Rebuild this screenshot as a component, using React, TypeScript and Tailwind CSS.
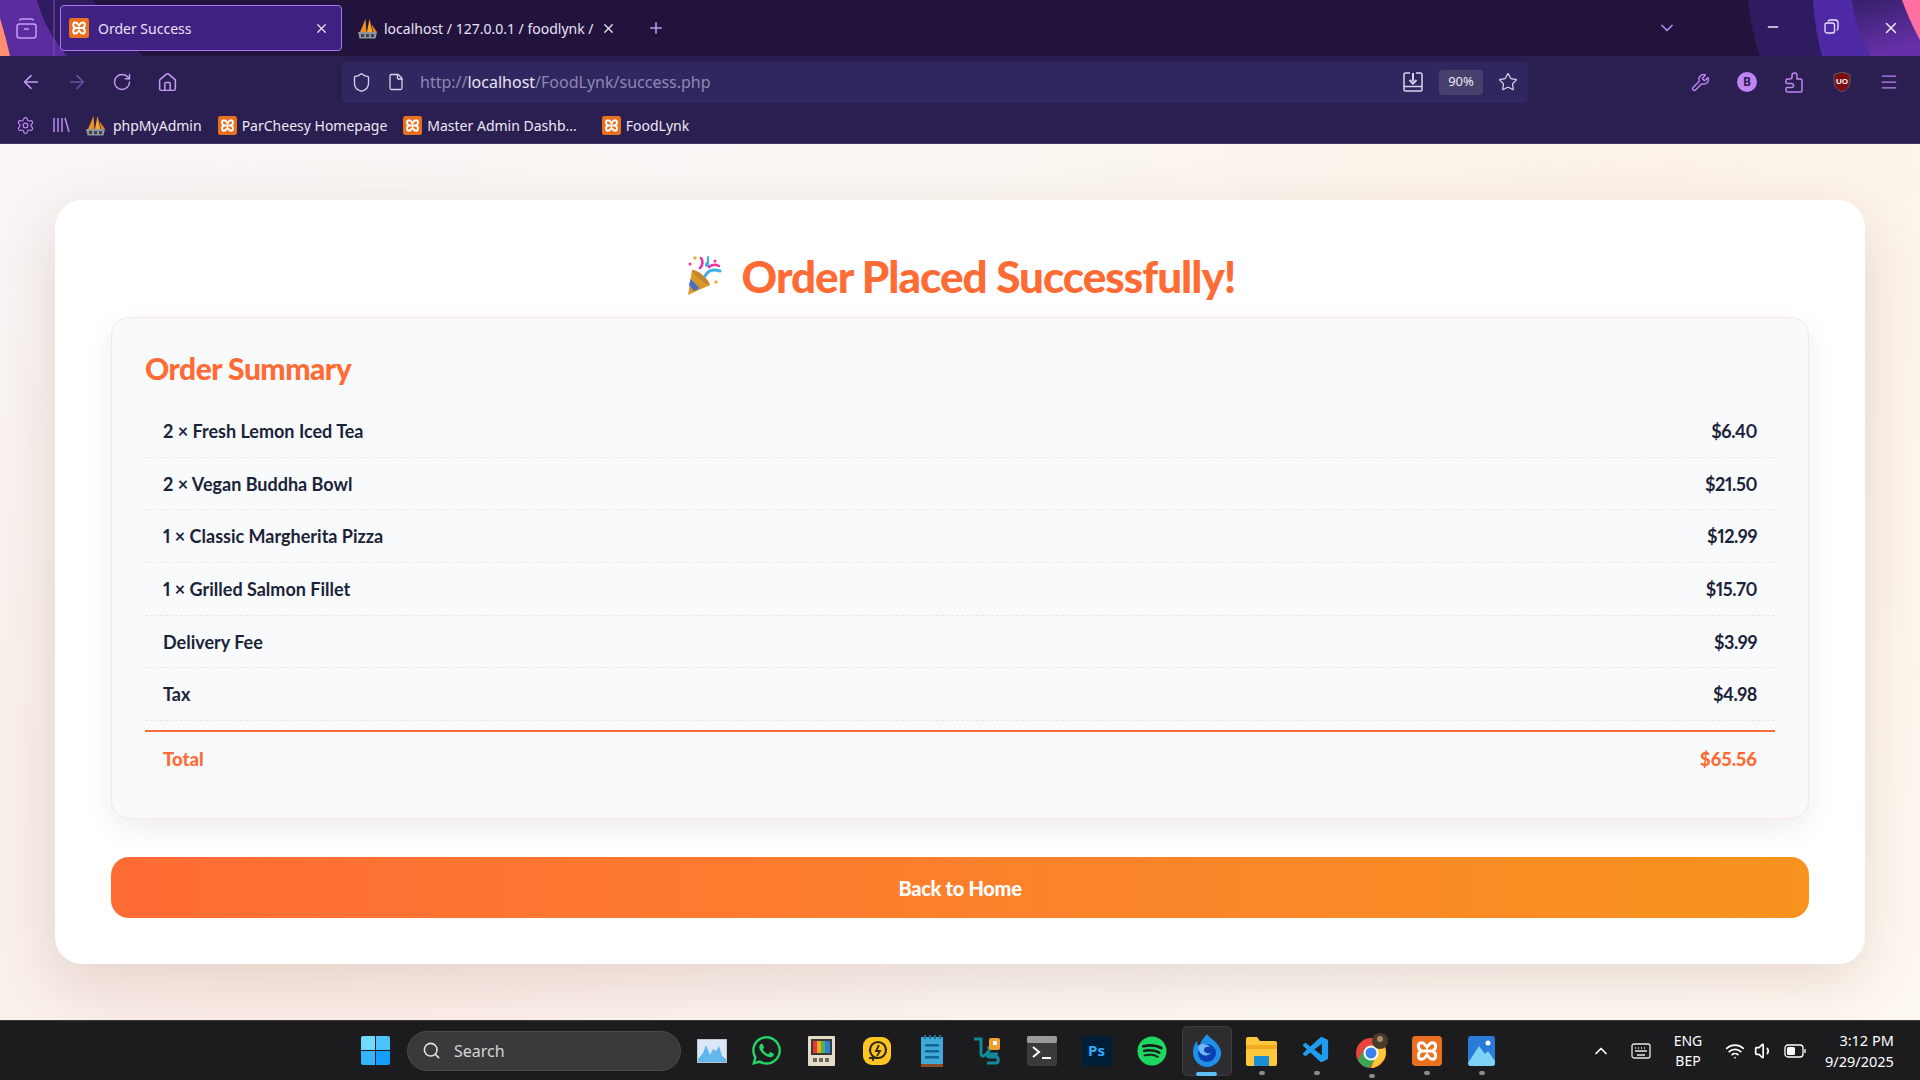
import { ArrowLeft, ArrowRight, ChevronDown, ChevronUp, File, Home, Menu, Minus, Plus, RotateCw, Search, Settings, Shield, Star, Volume1, Wifi, Wrench, X } from 'lucide-react';
import { FaSpotify, FaWhatsapp } from 'react-icons/fa';
import { VscVscode } from 'react-icons/vsc';

const uiFont = { fontFamily: '"Noto Sans", sans-serif' };

const items = [
  { name: '2 × Fresh Lemon Iced Tea', price: '$6.40' },
  { name: '2 × Vegan Buddha Bowl', price: '$21.50' },
  { name: '1 × Classic Margherita Pizza', price: '$12.99' },
  { name: '1 × Grilled Salmon Fillet', price: '$15.70' },
  { name: 'Delivery Fee', price: '$3.99' },
  { name: 'Tax', price: '$4.98' },
];

const XamppIcon = ({ size = 18 }: { size?: number }) => (
  <svg width={size} height={size} viewBox="0 0 20 20" className="shrink-0">
    <rect width="20" height="20" rx="2.500" fill="#e8701f" />
    <path d="M6.500 4.500c-3 0-3 4.500 0 5.500-3 1-3 5.500 0 5.500 1.500 0 2.500-1.500 3.500-3 1 1.500 2 3 3.500 3 3 0 3-4.500 0-5.500 3-1 3-5.500 0-5.500-1.500 0-2.500 1.500-3.500 3-1-1.500-2-3-3.500-3zM7 10h6" fill="none" stroke="#fff" strokeWidth="2" />
  </svg>
);

const PmaIcon = () => (
  <svg width="21" height="21" viewBox="0 0 21 21" className="shrink-0">
    <path d="M3 14 8.500 1l1 13z" fill="#e8912a" />
    <path d="M10 14 12.500 1l3 13z" fill="#f5a72f" />
    <path d="M16 14 14.500 6l5.500 8z" fill="#e07f1f" />
    <path d="M1 14h19l-1.500 6.500H2.500z" fill="#8f949c" />
    <path d="M4 16h3v3H4zM9 16h3v3H9zM14 16h3v3h-3z" fill="#3d4250" />
  </svg>
);

const PartyIcon = () => (
  <svg width="42" height="42" viewBox="0 0 42 42" className="shrink-0">
    <path d="M7 15 25 30 3 40z" fill="#d99a2b" />
    <path d="M5.500 24 14.500 33 9 36 4 30z" fill="#4a6fc4" />
    <path d="M7 15c5-1 17 9 18 15-4 0-16-9-18-15z" fill="#c9832c" />
    <path d="M15 13c3-3 3-7 1-10" fill="none" stroke="#ef2f9c" strokeWidth="2.500" strokeLinecap="round" />
    <path d="M20 21c3-6 9-7 15-5" fill="none" stroke="#41a9ee" strokeWidth="3" strokeLinecap="round" />
    <path d="M24 12c3-3 6-3 10-1" fill="none" stroke="#ef2f9c" strokeWidth="2.500" strokeLinecap="round" />
    <path d="M23 9c1 2-2 3-2 1s1-3 2-2V2" fill="none" stroke="#41a9ee" strokeWidth="2" strokeLinecap="round" />
    <circle cx="10" cy="3" r="1.800" fill="#e8b23e" />
    <circle cx="5" cy="9" r="1.500" fill="#ef2f9c" />
    <circle cx="30" cy="6" r="1.500" fill="#ef2f9c" />
    <circle cx="31" cy="27" r="1.800" fill="#e8b23e" />
  </svg>
);

const TabBar = () => (
  <div className="relative flex h-[56px] items-center bg-[#22133d]" style={uiFont}>
    {/* theme swooshes behind the tabs */}
    <svg className="absolute inset-0" width="1920" height="56" viewBox="0 0 1920 56">
      <defs>
        <linearGradient id="swoosh" x1="0" y1="0" x2="0.3" y2="1">
          <stop offset="0" stopColor="#35206a" />
          <stop offset="1" stopColor="#6530a8" />
        </linearGradient>
      </defs>
      <path d="M0 0h93q20 28 50 56H0z" fill="#2f1b5f" />
      <path d="M0 0h37q8 30 30 56H0z" fill="#5a2ca0" />
      <path d="M53.500 0h1v56h-1z" fill="#7b55b8" />
      <path d="M0 18q6 20 10 38H0z" fill="#ff8f70" />
      <path d="M1748 0h172v56h-160q-9-25-12-56z" fill="#2f1b5f" />
      <path d="M1813 0h39q4 30 18 56h-48q-7-25-9-56z" fill="#4f2aa6" />
      <path d="M1852 0h68v56h-50q-14-26-18-56z" fill="url(#swoosh)" />
      <path d="M1902 0h18v40q-11-20-18-40z" fill="#ff6fa0" />
    </svg>
    <div className="relative flex w-[52px] justify-center">
      <svg width="21" height="21" viewBox="0 0 21 21" fill="none" stroke="#c59cf5" strokeWidth="1.500">
        <rect x="1" y="6" width="19" height="14" rx="2.500" />
        <path d="M3.500 2.500c.3-1 1-1.500 2-1.500h10c1 0 1.700.5 2 1.500M8 11h5" />
      </svg>
    </div>
    <div className="relative ml-2 flex h-[46px] w-[282px] items-center rounded-[4px] border border-[#a678ee] bg-[#3e2180] px-2">
      <XamppIcon size={20} />
      <span className="ml-[9px] flex-1 text-[14px] text-[#e9e3f7]">Order Success</span>
      <X size={15} className="mr-[4px] text-[#ece6f8]" />
    </div>
    <div className="relative ml-[15px] flex w-[270px] items-center">
      <PmaIcon />
      <span className="ml-[6px] w-[217px] overflow-hidden text-[14px] whitespace-nowrap text-[#e9e3f7]">localhost / 127.0.0.1 / foodlynk / </span>
      <X size={15} className="text-[#ece6f8]" />
    </div>
    <Plus size={18} className="relative ml-[20px] text-[#c59cf5]" />
    <div className="flex-1" />
    <ChevronDown size={20} className="relative mr-[66px] text-[#b78bf0]" />
    <div className="relative flex text-[#ece6f8]">
      <div className="flex w-[59px] justify-center"><Minus size={16} /></div>
      <div className="flex w-[59px] justify-center">
        <svg width="15" height="15" viewBox="0 0 15 15" fill="none" stroke="currentColor" strokeWidth="1.300">
          <rect x="1" y="4" width="9.500" height="10" rx="2" />
          <path d="M4 2.500C4.500 1.300 5 1 6.500 1H11c2 0 3 1 3 3v5c0 1-.5 2-1.500 2.500" />
        </svg>
      </div>
      <div className="flex w-[59px] justify-center"><X size={18} /></div>
    </div>
  </div>
);

const Toolbar = () => (
  <div className="relative flex h-[47px] items-center bg-[#2a1f50] pt-[5px]" style={uiFont}>
    <div className="flex w-[342px] items-center pl-[20px] text-[#c59cf5]">
      <ArrowLeft size={22} strokeWidth={1.700} />
      <ArrowRight size={22} strokeWidth={1.700} className="ml-[24px] text-[#6d4ea6]" />
      <RotateCw size={20} strokeWidth={1.700} className="ml-[24px]" />
      <Home size={21} strokeWidth={1.700} className="ml-[25px]" />
    </div>
    <div className="flex h-[41px] w-[1186px] items-center rounded-[5px] bg-[#302660] pl-[9px] text-[#d9d3ea]">
      <Shield size={21} strokeWidth={1.500} />
      <File size={18} strokeWidth={1.700} className="ml-[15px]" />
      <span className="ml-[15px] flex-1 text-[16px] text-[#8f88b3]">
        http://<span className="text-[#e8e4f4]">localhost</span>/FoodLynk/success.php
      </span>
      <svg width="20" height="20" viewBox="0 0 20 20" fill="none" stroke="currentColor" strokeWidth="1.500">
        <path d="M7 1H2.500A1.500 1.500 0 0 0 1 2.500v15A1.500 1.500 0 0 0 2.500 19h15a1.500 1.500 0 0 0 1.500-1.500v-15A1.500 1.500 0 0 0 17.500 1H13M1 14.500h18" />
        <path d="M10 1v8M6.500 8 10 11.500 13.500 8" strokeWidth="2" />
      </svg>
      <span className="ml-[16px] flex h-[25px] w-[44px] items-center justify-center rounded-[3px] bg-[#45406c] text-[13px] text-[#ece9f5]">90%</span>
      <Star size={20} strokeWidth={1.500} className="mr-[10px] ml-[15px]" />
    </div>
    <div className="ml-[163px] flex items-center text-[#c084f5]">
      <Wrench size={19} strokeWidth={1.800} />
      <span className="ml-[27px] flex h-[20px] w-[20px] items-center justify-center rounded-full bg-[#c084f5] text-[12px] font-bold text-[#2a1f50]">B</span>
      <svg width="18" height="21" viewBox="0 0 18 21" fill="none" stroke="currentColor" strokeWidth="1.500" className="ml-[28px]">
        <path d="M7 5V3.500a2.500 2.500 0 0 1 5 0V7h3.500a1.500 1.500 0 0 1 1.500 1.500v10a1.500 1.500 0 0 1-1.500 1.500h-13A1.500 1.500 0 0 1 1 18.500v-2a1 1 0 0 1 1-1h4.500a2 2 0 0 0 0-4H2a1 1 0 0 1-1-1V8.500A1.500 1.500 0 0 1 2.500 7H5a2 2 0 0 0 2-2z" />
      </svg>
      <svg width="20" height="22" viewBox="0 0 20 22" className="ml-[29px]">
        <path d="M10 1 18 3.500V11c0 5-4 8-8 10-4-2-8-5-8-10V3.500z" fill="#7d0d12" stroke="#53606e" strokeWidth="1" />
        <text x="10" y="13" textAnchor="middle" fontSize="8" fontWeight="700" fill="#fff" fontFamily="Liberation Sans, sans-serif">UO</text>
      </svg>
      <Menu size={20} strokeWidth={1.500} className="ml-[27px]" />
    </div>
  </div>
);

const Bookmark = ({ label, className = '' }: { label: string; className?: string }) => (
  <div className={`flex items-center gap-[5px] ${className}`}>
    <XamppIcon size={19} />
    <span className="text-[14px] whitespace-nowrap text-[#ece8f6]">{label}</span>
  </div>
);

const Bookmarks = () => (
  <div className="flex h-[41px] items-center border-b border-[#3f3566] bg-[#2a1f50] pt-[4px] pl-[16px]" style={uiFont}>
    <Settings size={19} strokeWidth={1.500} className="text-[#c084f5]" />
    <svg width="18" height="18" viewBox="0 0 18 18" fill="none" stroke="#b78bf0" strokeWidth="1.500" className="ml-[17px]">
      <path d="M2 2v14M6 2v14M10 2v14M13 2l4 14" />
    </svg>
    <div className="ml-[15px] flex items-center gap-[7px]">
      <PmaIcon />
      <span className="text-[14px] text-[#ece8f6]">phpMyAdmin</span>
    </div>
    <Bookmark label="ParCheesy Homepage" className="ml-[16px]" />
    <Bookmark label="Master Admin Dashb..." className="ml-[16px]" />
    <Bookmark label="FoodLynk" className="ml-[25px]" />
  </div>
);

const OrderCard = () => (
  <div className="rounded-[27px] bg-white px-[56px] pt-[50px] pb-[46px] shadow-[0_20px_60px_rgba(80,30,10,0.13)]" style={{ fontFamily: 'Lato, sans-serif' }}>
    <h1 className="flex h-[52px] items-center justify-center gap-[15px] text-[44px] leading-none font-black tracking-[-1px] text-[#ff6b35]">
      <PartyIcon />
      <span>Order Placed Successfully!</span>
    </h1>
    <div className="mt-[15px] h-[502px] rounded-[18px] border border-[#fbe6df] bg-[#f9fafc] px-[33px] pt-[30px] shadow-[0_10px_30px_rgba(0,0,0,0.07)]">
      <h2 className="flex h-[40px] items-center text-[30px] leading-none font-black tracking-[-0.500px] text-[#ff6b35]">Order Summary</h2>
      <div className="mt-[17px]">
        {items.map((item) => (
          <div key={item.name} className="flex h-[52.700px] items-center justify-between border-b border-dashed border-[#e6e8ec] px-[18px] pt-[1px] text-[18px] font-bold text-[#1b2338] proportional-nums">
            <span>{item.name}</span>
            <span className="tracking-[-0.400px]">{item.price}</span>
          </div>
        ))}
      </div>
      <div className="mt-[9px] flex h-[56px] items-center justify-between border-t-2 border-[#ff6b35] px-[18px] pt-[2px] text-[18.500px] font-black text-[#ff6b35] proportional-nums">
        <span>Total</span>
        <span>$65.56</span>
      </div>
    </div>
    <button className="mt-[38px] flex h-[61px] w-full items-center justify-center rounded-[18px] bg-gradient-to-r from-[#ff6b35] to-[#f7931e] text-[20px] font-black tracking-[-0.300px] text-white">
      Back to Home
    </button>
  </div>
);

const TrayIcon = ({ children }: { children: React.ReactNode }) => (
  <div className="flex h-[50px] w-[55px] shrink-0 items-center justify-center">{children}</div>
);

const Pip = () => <span className="absolute bottom-[-9px] h-[4px] w-[6px] rounded-full bg-[#8a8a8a]" />;

const Taskbar = () => (
  <div className="flex h-[60px] items-center border-t border-[#3a3a3c] bg-[#1c1c1e] text-white" style={uiFont}>
    <div className="ml-[361px] grid h-[29px] w-[29px] shrink-0 grid-cols-2 gap-[1px]">
      <span className="rounded-tl-[2px] bg-[#6fdcfd]" />
      <span className="rounded-tr-[2px] bg-[#4ac4fb]" />
      <span className="rounded-bl-[2px] bg-[#35b5fb]" />
      <span className="rounded-br-[2px] bg-[#149efb]" />
    </div>
    <div className="ml-[17px] flex h-[40px] w-[274px] shrink-0 items-center rounded-full border border-[#4a4a4c] bg-[#3a3a3c] pl-[14px]">
      <Search size={19} className="text-[#e4e4e4]" />
      <span className="ml-[13px] text-[16px] text-[#d5d5d5]">Search</span>
    </div>
    <div className="ml-[3px] flex items-center">
      <TrayIcon>
        <svg width="30" height="24" viewBox="0 0 30 24">
          <rect width="30" height="24" fill="#d9e8f4" stroke="#9aa3ad" />
          <path d="M1 20 6 14l3-8 4 10 3-6 3 2 3-5 3 10 4 3v3H1z" fill="#62b6ee" />
        </svg>
      </TrayIcon>
      <TrayIcon><FaWhatsapp size={33} className="text-[#25d366]" /></TrayIcon>
      <TrayIcon>
        <svg width="27" height="30" viewBox="0 0 27 30">
          <rect width="27" height="30" rx="1" fill="#e4dcc8" />
          <rect x="3" y="3" width="21" height="16" fill="#3a3a3a" />
          <path d="M5 5h4v12H5z" fill="#e63a2a" />
          <path d="M9 5h4v12H9z" fill="#f5a623" />
          <path d="M13 5h4v12h-4z" fill="#4db34a" />
          <path d="M17 5h5v12h-5z" fill="#2e7fd6" />
          <path d="M5 22h4v4H5zM11 22h4v4h-4zM17 22h4v4h-4z" fill="#6d6a60" />
        </svg>
      </TrayIcon>
      <TrayIcon>
        <svg width="28" height="28" viewBox="0 0 28 28">
          <rect width="28" height="28" rx="9" fill="#fdc422" />
          <circle cx="15" cy="13" r="8" fill="none" stroke="#33291a" strokeWidth="2.200" />
          <path d="M10 19v5M6 21h10M16 8l-3 6h4l-3 5" fill="none" stroke="#33291a" strokeWidth="1.800" />
        </svg>
      </TrayIcon>
      <TrayIcon>
        <svg width="22" height="32" viewBox="0 0 22 32">
          <rect y="2" width="22" height="28" fill="#3fa9d8" />
          <rect y="29" width="22" height="3" fill="#8a4b25" />
          <path d="M4 9h14v2.500H4zM4 15h14v2.500H4zM4 21h14v2.500H4z" fill="#0f6690" />
          <path d="M3 0h2v4H3zM8 0h2v4H8zM13 0h2v4h-2zM18 0h2v4h-2z" fill="#1f6f96" />
        </svg>
      </TrayIcon>
      <TrayIcon>
        <svg width="30" height="30" viewBox="0 0 30 30" fill="none">
          <path d="M2 3h7v14c0 3 2 4 4 2l4-4v-5" stroke="#138a9a" strokeWidth="3" />
          <path d="M15 27h9c3 0 3-6 0-6h-7c-2 0-2-3 1-3h8" stroke="#138a9a" strokeWidth="3" />
          <rect x="17" y="2" width="11" height="12" rx="2" fill="#f0a02a" />
          <rect x="21" y="5" width="4" height="4" fill="#fff" />
        </svg>
      </TrayIcon>
      <TrayIcon>
        <svg width="30" height="30" viewBox="0 0 30 30">
          <rect width="30" height="30" rx="2" fill="#3a3a3a" />
          <rect width="30" height="7" rx="2" fill="#9a9a9a" />
          <path d="M6 11l6 5-6 5" fill="none" stroke="#fff" strokeWidth="2" />
          <path d="M15 22h9" stroke="#fff" strokeWidth="2" />
        </svg>
      </TrayIcon>
      <TrayIcon>
        <div className="flex h-[30px] w-[30px] items-center justify-center rounded-[4px] bg-[#001e36] text-[15px] font-bold text-[#31a8ff]">Ps</div>
      </TrayIcon>
      <TrayIcon><FaSpotify size={30} className="text-[#1ed760]" /></TrayIcon>
      <div className="relative mx-[2.500px] flex h-[50px] w-[50px] shrink-0 items-center justify-center rounded-[5px] border border-[#3c3c3e] bg-[#2d2d2f]">
        <svg width="30" height="34" viewBox="0 0 30 34">
          <path d="M15 0c2 4 11 7 14 17 1 9-6 16-14 16S1 26 1 18c0-5 2-9 4-11 0 3 1 5 3 6 0-6 4-9 7-13z" fill="#1e90e8" />
          <circle cx="15" cy="19" r="9" fill="#0d3fb0" />
          <path d="M7 11c3-2 9-1 11 2-3-1-6 0-6 3s4 4 7 3c-3 4-10 3-12-2-1-2-1-4 0-6z" fill="#6fb8fa" />
        </svg>
        <span className="absolute bottom-[-1px] h-[4px] w-[21px] rounded-full bg-[#5cc0f5]" />
      </div>
      <TrayIcon>
        <div className="relative flex justify-center">
          <svg width="31" height="30" viewBox="0 0 31 30">
            <path d="M0 3a2 2 0 0 1 2-2h9l3 4h15a2 2 0 0 1 2 2v21a2 2 0 0 1-2 2H2a2 2 0 0 1-2-2z" fill="#fdc83c" />
            <path d="M0 9h31v4H0z" fill="#f2ab1e" />
            <rect x="8" y="20" width="15" height="10" fill="#1a8fd6" />
          </svg>
          <Pip />
        </div>
      </TrayIcon>
      <TrayIcon>
        <div className="relative flex justify-center">
          <VscVscode size={31} className="text-[#1f9cf0]" />
          <Pip />
        </div>
      </TrayIcon>
      <TrayIcon>
        <div className="relative flex justify-center">
          <svg width="32" height="36" viewBox="0 0 32 36">
            <circle cx="15" cy="20" r="15" fill="#e8453c" />
            <path d="M2 27 9 15l6 5 6 4-8 11C8 34 4 31 2 27z" fill="#3aa757" />
            <path d="M15 35 21 20l-6-6h14c2 5 1 11-3 15-3 4-7 6-11 6z" fill="#fcc934" />
            <circle cx="15" cy="20" r="7.500" fill="#fff" />
            <circle cx="15" cy="20" r="5.500" fill="#3b82f0" />
            <circle cx="24" cy="8" r="8" fill="#4a3a2a" />
            <circle cx="24" cy="6" r="3" fill="#a98b6a" />
          </svg>
          <Pip />
        </div>
      </TrayIcon>
      <TrayIcon>
        <div className="relative flex justify-center">
          <XamppIcon size={30} />
          <Pip />
        </div>
      </TrayIcon>
      <TrayIcon>
        <div className="relative flex justify-center">
          <svg width="27" height="30" viewBox="0 0 27 30">
            <rect width="27" height="30" rx="3" fill="#2a7ad8" />
            <path d="M0 27 11 10l6 8 3-3 7 10v2a3 3 0 0 1-3 3H3a3 3 0 0 1-3-3z" fill="#7fd3f7" />
            <circle cx="20" cy="7" r="2.500" fill="#fff" />
          </svg>
          <Pip />
        </div>
      </TrayIcon>
    </div>
    <div className="ml-[82px] flex items-center">
      <ChevronUp size={20} />
      <svg width="20" height="18" viewBox="0 0 20 18" fill="none" stroke="#e8e8e8" strokeWidth="1.300" className="ml-[20px]">
        <rect x="1" y="2" width="18" height="14" rx="2" />
        <path d="M4 6h1M7 6h1M10 6h1M13 6h1M16 6h0M4 9h12M6 13h8" />
      </svg>
      <div className="ml-[12px] flex w-[50px] flex-col items-center text-[14px] leading-[20px]">
        <span>ENG</span>
        <span>BEP</span>
      </div>
      <Wifi size={20} className="ml-[12px]" />
      <Volume1 size={20} className="ml-[9px]" />
      <svg width="22" height="14" viewBox="0 0 22 14" fill="none" stroke="#fff" strokeWidth="1.300" className="ml-[10px]">
        <rect x="1" y="1" width="18" height="12" rx="3" />
        <rect x="3" y="3" width="8" height="8" rx="1.500" fill="#fff" stroke="none" />
        <path d="M21 5v4" />
      </svg>
      <div className="ml-[19px] flex flex-col items-end text-[14.500px] leading-[21px]">
        <span>3:12 PM</span>
        <span>9/29/2025</span>
      </div>
    </div>
  </div>
);

export default function App() {
  return (
    <div className="flex h-screen w-full flex-col overflow-hidden">
      <TabBar />
      <Toolbar />
      <Bookmarks />
      <main className="flex-1 bg-[radial-gradient(circle_at_15%_85%,rgba(255,107,53,0.09),transparent_55%),radial-gradient(circle_at_85%_15%,rgba(247,147,30,0.08),transparent_55%),linear-gradient(135deg,#f8f8f8,#fffaf5)] px-[55px] pt-[56px]">
        <OrderCard />
      </main>
      <Taskbar />
    </div>
  );
}
